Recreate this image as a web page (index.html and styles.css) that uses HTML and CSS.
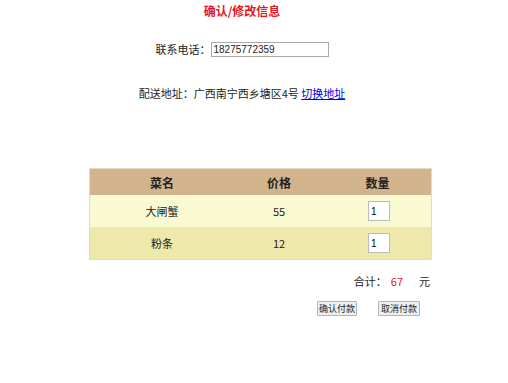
FILE: index.html
```html
<!DOCTYPE html>
<html lang="zh">
<head>
  <meta charset="UTF-8">
  <title>确认/修改信息</title>
  <link rel="stylesheet" href="styles.css">
</head>
<body>
  <div class="page">
    <h1 class="title">确认/修改信息</h1>

    <div class="info-row phone-row">
      <label>联系电话：</label>
      <input class="phone-input" type="text" value="18275772359">
    </div>

    <div class="info-row address-row">
      配送地址：广西南宁西乡塘区4号 <a href="#" class="switch-link">切换地址</a>
    </div>

    <!-- 订单表格 -->
    <table class="order-table">
      <thead>
        <tr>
          <th class="col-name">菜名</th>
          <th class="col-price">价格</th>
          <th class="col-qty">数量</th>
        </tr>
      </thead>
      <tbody>
        <tr class="row-odd">
          <td>大闸蟹</td>
          <td>55</td>
          <td><input class="qty-input" type="text" value="1"></td>
        </tr>
        <tr class="row-even">
          <td>粉条</td>
          <td>12</td>
          <td><input class="qty-input" type="text" value="1"></td>
        </tr>
      </tbody>
    </table>

    <div class="summary">
      合计：<span class="total">67</span><span class="unit">元</span>
    </div>

    <div class="actions">
      <button class="btn">确认付款</button>
      <button class="btn">取消付款</button>
    </div>
  </div>
</body>
</html>
```

FILE: styles.css
```css
body {
  margin: 0;
  font-family: "Noto Sans CJK SC", "Noto Sans", sans-serif;
  font-size: 11px;
  color: #222;
  background: #fff;
}

.page {
  width: 508px;
}

/* 标题 */
.title {
  width: 484px;
  margin: 0;
  padding-top: 3px;
  text-align: center;
  font-size: 12px;
  font-weight: bold;
  color: #e8141b;
  line-height: 16px;
}

.info-row {
  width: 484px;
  text-align: center;
  line-height: 16px;
}

.phone-row {
  margin-top: 22px;
  display: flex;
  justify-content: center;
  align-items: center;
}

.phone-input {
  box-sizing: border-box;
  width: 118px;
  height: 15px;
  padding: 0 2px;
  margin: 0;
  border: 1px solid #a9a9a9;
  font-family: "Liberation Sans", sans-serif;
  font-size: 10px;
  color: #222;
}

.address-row {
  margin-top: 28px;
}

.switch-link {
  color: #0000ee;
}

/* 表格 */
.order-table {
  margin-top: 67px;
  margin-left: 89px;
  width: 343px;
  border-collapse: collapse;
  border: 1px solid #e4dcc0;
  text-align: center;
}

.order-table th {
  background-color: #d2b48c;
  height: 26px;
  padding: 0;
  font-size: 12px;
  font-weight: bold;
}

.order-table td {
  height: 32px;
  padding: 0;
}

.col-name { width: 144px; }
.col-price { width: 90px; }

.row-odd { background-color: #fafad2; }
.row-even { background-color: #eee8aa; }

.qty-input {
  box-sizing: border-box;
  width: 22px;
  height: 20px;
  padding: 0 2px;
  margin-left: 3px;
  border: 1px solid #bbb;
  font-family: "Liberation Sans", sans-serif;
  font-size: 10px;
  vertical-align: middle;
}

/* 合计 */
.summary {
  width: 343px;
  margin-left: 89px;
  margin-top: 13px;
  text-align: right;
  line-height: 16px;
  box-sizing: border-box;
  padding-right: 2px;
}

.total {
  color: #e8141b;
  margin: 0 16px 0 4px;
}

.actions {
  width: 343px;
  margin-left: 89px;
  margin-top: 12px;
  display: flex;
  justify-content: flex-end;
  gap: 21px;
  box-sizing: border-box;
  padding-right: 12px;
}

.btn {
  box-sizing: border-box;
  font-family: "Noto Sans CJK SC", sans-serif;
  font-size: 9px;
  width: 40px;
  padding: 0;
  height: 15px;
  line-height: 13px;
  background: #efefef;
  border: 1px solid #b4b4b4;
  border-radius: 1px;
  color: #222;
}

.btn + .btn {
  width: 42px;
}
```
